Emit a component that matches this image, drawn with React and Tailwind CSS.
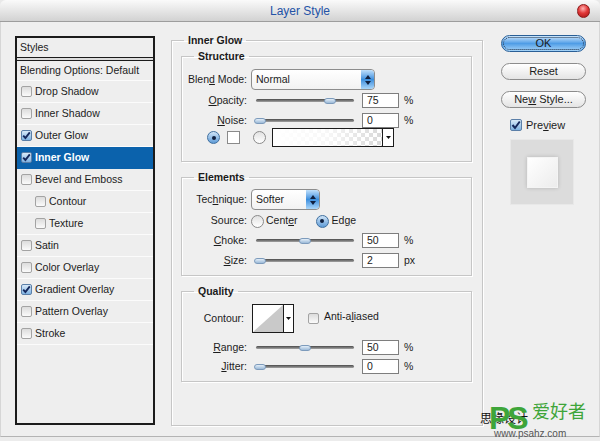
import React from "react";

const font = { fontFamily: '"Liberation Sans", Arial, sans-serif' };
const cjk = { fontFamily: '"Noto Sans CJK SC", sans-serif' };

const Check = ({ checked, indent }) => (
  <span
    className={`inline-flex items-center justify-center w-[11px] h-[11px] shrink-0 rounded-[2px] border ${
      checked
        ? "border-[#5b7fa8] bg-gradient-to-b from-[#d8e9f8] to-[#7fb2e2]"
        : "border-[#a3a3a3] bg-gradient-to-b from-[#dcdcdc] to-[#fbfbfb]"
    } ${indent ? "ml-[18px]" : "ml-[4px]"}`}
  >
    {checked && (
      <svg width="9" height="9" viewBox="0 0 9 9">
        <path d="M1.2 4.6 L3.4 7 L7.8 1.4" stroke="#15285c" strokeWidth="1.9" fill="none" />
      </svg>
    )}
  </span>
);

const Radio = ({ on, className = "" }) => (
  <span
    className={`flex items-center justify-center w-[13px] h-[13px] shrink-0 rounded-full border ${
      on
        ? "border-[#3f6f9f] bg-gradient-to-b from-[#cfe4f7] to-[#5e9bd6]"
        : "border-[#8a8a8a] bg-gradient-to-b from-[#e2e2e2] to-[#ffffff]"
    } ${className}`}
  >
    {on && <span className="w-[4px] h-[4px] rounded-full bg-[#10203f]" />}
  </span>
);

const Select = ({ value, w }) => (
  <div className={`${w} ml-[4px] h-[21px] flex rounded-[4px] border border-[#8d8d8d] bg-gradient-to-b from-[#ffffff] to-[#f2f2f2] overflow-hidden`}>
    <div className="flex-1 flex items-center pl-[4px]">{value}</div>
    <div className="w-[13px] flex flex-col items-center justify-center gap-[2px] rounded-r-[3px] bg-gradient-to-b from-[#bfe0fb] via-[#3b8fdd] to-[#a9d6fa]">
      <svg width="6" height="4" viewBox="0 0 6 4"><path d="M0 4 L3 0 L6 4Z" fill="#10203f" /></svg>
      <svg width="6" height="4" viewBox="0 0 6 4"><path d="M0 0 L3 4 L6 0Z" fill="#10203f" /></svg>
    </div>
  </div>
);

const Slider = ({ thumb }) => (
  <div className="relative w-[98px] h-[10px] flex items-center ml-[9px]">
    <div className="h-[3px] w-full rounded-full bg-gradient-to-b from-[#4b4b4b] to-[#a5a5a5]" />
    <div className={`absolute top-[2px] ${thumb} w-[12px] h-[6px] rounded-full border border-[#7d9bbc] bg-gradient-to-b from-[#e3eef8] to-[#9cbad8]`} />
  </div>
);

const Num = ({ v }) => (
  <div className="ml-[8px] w-[37px] h-[15px] border border-[#7e7e7e] bg-white flex items-center pl-[4px]">
    {v}
  </div>
);

const Label = ({ children, w = "w-[65px]" }) => (
  <div className={`${w} shrink-0 text-right text-[#1c1c1c]`}>{children}</div>
);

const SliderRow = ({ label, thumb, v, unit, mt }) => (
  <div className={`flex items-center h-[15px] ${mt}`}>
    <Label>{label}</Label>
    <Slider thumb={thumb} />
    <Num v={v} />
    <span className="ml-[5px]">{unit}</span>
  </div>
);

const Group = ({ title, children, className }) => (
  <fieldset className={`border border-[#c6c6c6] shadow-[inset_1px_1px_0_#fff,1px_1px_0_#fff] p-0 m-0 ${className}`}>
    <legend className="ml-[12px] px-[4px] font-bold leading-[13px] text-[#1a1a1a]">{title}</legend>
    {children}
  </fieldset>
);

const u = (c) => <span className="underline">{c}</span>;

const styles = [
  { n: "Drop Shadow" },
  { n: "Inner Shadow" },
  { n: "Outer Glow", c: true },
  { n: "Inner Glow", c: true, sel: true },
  { n: "Bevel and Emboss" },
  { n: "Contour", i: true },
  { n: "Texture", i: true },
  { n: "Satin" },
  { n: "Color Overlay" },
  { n: "Gradient Overlay", c: true },
  { n: "Pattern Overlay" },
  { n: "Stroke" },
];

export default function App() {
  return (
    <div className="relative w-[600px] h-[441px] overflow-hidden flex flex-col bg-[#e9e9e9] text-[#1c1c1c] text-[10.5px]" style={font}>
      {/* title bar */}
      <div className="relative h-[22px] shrink-0 flex items-center justify-center rounded-t-[6px] border-b border-[#9d9d9d] bg-gradient-to-b from-[#fafafa] via-[#e6e6e6] to-[#d2d2d2]">
        <span className="text-[12px] text-[#2452a6]">Layer Style</span>
        <span className="absolute right-[10px] top-[4px] w-[13px] h-[14px] rounded-full border border-[#8c1a1a] bg-[radial-gradient(circle_at_45%_30%,#ffb3b3_0%,#e23a3a_45%,#a31212_100%)]" />
      </div>

      {/* body */}
      <div className="h-[415px] shrink-0 flex pl-[14px] pt-[14px] bg-[#efefef] border-b border-[#b4b4b4] border-x border-x-[#d6d6d6]">
        {/* left list */}
        <div className="w-[140px] h-[389px] border-2 border-[#1b1b1b] bg-[#eeeeee] flex flex-col">
          <div className="h-[20px] flex items-center pl-[3px] border-b border-[#1b1b1b]">Styles</div>
          <div className="h-[2px] bg-[#dcdcdc]" />
          <div className="h-[1px] bg-[#1b1b1b]" />
          <div className="h-[20px] flex items-center pl-[3px] border-b border-[#fbfbfb]">Blending Options: Default</div>
          {styles.map((s) => (
            <div
              key={s.n}
              className={`h-[22px] flex items-center gap-[3px] border-b ${
                s.sel ? "bg-[#0b62ac] text-white font-bold border-[#0b62ac]" : "border-[#fbfbfb]"
              }`}
            >
              <Check checked={s.c} indent={s.i} />
              <span>{s.n}</span>
            </div>
          ))}
        </div>

        {/* middle */}
        <div className="ml-[16px] -mt-[2px] w-[312px] h-[392px]">
          <Group title="Inner Glow" className="h-full">
            <div className="pl-[9px] pr-[10px] pt-[3px]">
              <Group title="Structure">
                <div className="pt-[6px] pb-[14px]">
                  <div className="flex items-center h-[21px]">
                    <Label>Blen{u("d")} Mode:</Label>
                    <Select value="Normal" w="w-[124px]" />
                  </div>
                  <SliderRow label={<>{u("O")}pacity:</>} thumb="left-[68px]" v="75" unit="%" mt="mt-[3px]" />
                  <SliderRow label={<>{u("N")}oise:</>} thumb="left-[-2px]" v="0" unit="%" mt="mt-[5px]" />
                  <div className="flex items-center h-[19px]">
                    <Radio on className="ml-[25px]" />
                    <span className="ml-[7px] w-[13px] h-[13px] bg-white border border-[#8a8a8a]" />
                    <Radio className="ml-[13px]" />
                    <div className="ml-[6px] w-[122px] h-[19px] border border-[#1b1b1b] flex">
                      <div className="flex-1 relative bg-[conic-gradient(#d9d9d9_25%,#ffffff_0_50%,#d9d9d9_0_75%,#ffffff_0)] bg-[length:8px_8px]">
                        <div className="absolute inset-0 bg-gradient-to-r from-white via-white/80 to-white/0" />
                      </div>
                      <div className="w-[11px] border-l border-[#1b1b1b] bg-white flex items-center justify-center">
                        <svg width="5" height="3" viewBox="0 0 5 3"><path d="M0 0 L2.5 3 L5 0Z" fill="#111" /></svg>
                      </div>
                    </div>
                  </div>
                </div>
              </Group>

              <Group title="Elements" className="mt-[9px]">
                <div className="pt-[5px] pb-[7px]">
                  <div className="flex items-center h-[21px]">
                    <Label>Tec{u("h")}nique:</Label>
                    <Select value="Softer" w="w-[69px]" />
                  </div>
                  <div className="flex items-center h-[14px] mt-[4px]">
                    <Label>Source:</Label>
                    <Radio className="ml-[4px]" />
                    <span className="ml-[2px]">Cent{u("e")}r</span>
                    <Radio on className="ml-[18px]" />
                    <span className="ml-[3px]">Ed{u("g")}e</span>
                  </div>
                  <SliderRow label={<>{u("C")}hoke:</>} thumb="left-[43px]" v="50" unit="%" mt="mt-[5px]" />
                  <SliderRow label={<>{u("S")}ize:</>} thumb="left-[-2px]" v="2" unit="px" mt="mt-[5px]" />
                </div>
              </Group>

              <Group title="Quality" className="mt-[9px]">
                <div className="pt-[6px] pb-[7px]">
                  <div className="flex items-center h-[29px]">
                    <Label w="w-[62px]">Contour:</Label>
                    <div className="ml-[8px] w-[42px] h-[29px] flex border border-[#1b1b1b] bg-white">
                      <svg width="30" height="27" viewBox="0 0 30 27" className="shrink-0">
                        <polygon points="0,27 30,0 30,27" fill="#c9c9c9" />
                      </svg>
                      <div className="flex-1 border-l border-[#1b1b1b] flex items-center justify-center">
                        <svg width="5" height="3" viewBox="0 0 5 3"><path d="M0 0 L2.5 3 L5 0Z" fill="#111" /></svg>
                      </div>
                    </div>
                    <span className="ml-[10px] flex"><Check /></span>
                    <span className="ml-[5px] -mt-[3px]">Anti-a{u("l")}iased</span>
                  </div>
                  <SliderRow label={<>{u("R")}ange:</>} thumb="left-[43px]" v="50" unit="%" mt="mt-[7px]" />
                  <SliderRow label={<>{u("J")}itter:</>} thumb="left-[-2px]" v="0" unit="%" mt="mt-[4px]" />
                </div>
              </Group>
            </div>
          </Group>
        </div>

        {/* right buttons */}
        <div className="ml-[18px] -mt-[1px] w-[85px] flex flex-col text-[11px]">
          <div className="h-[17px] rounded-full border border-[#2a5f96] bg-gradient-to-b from-[#cbe6fc] via-[#4f9de6] to-[#a6d4f8] p-[1px]">
            <div className="h-full rounded-full border border-dotted border-[#1a2a40] flex items-center justify-center">OK</div>
          </div>
          <div className="mt-[11px] h-[17px] rounded-full border border-[#8c8c8c] bg-gradient-to-b from-[#ffffff] to-[#e4e4e4] flex items-center justify-center">
            Reset
          </div>
          <div className="mt-[11px] h-[17px] rounded-full border border-[#8c8c8c] bg-gradient-to-b from-[#ffffff] to-[#e4e4e4] flex items-center justify-center">
            <span>Ne{u("w")} Style...</span>
          </div>
          <div className="mt-[11px] h-[12px] flex items-center">
            <span className="ml-[9px] inline-flex items-center justify-center w-[12px] h-[12px] rounded-[2px] border border-[#5b7fa8] bg-gradient-to-b from-[#d8e9f8] to-[#7fb2e2]">
              <svg width="10" height="10" viewBox="0 0 10 10">
                <path d="M1.5 5 L4 8 L8.8 1.5" stroke="#15285c" strokeWidth="2" fill="none" />
              </svg>
            </span>
            <span className="ml-[4px]">Pre{u("v")}iew</span>
          </div>
          <div className="mt-[8px] ml-[9px] w-[64px] h-[66px] bg-[#dcdcdc] border border-[#e8e8e8] flex items-center justify-center">
            <div className="w-[31px] h-[31px] bg-gradient-to-br from-[#ffffff] to-[#ececec] border border-[#f4f4f4] shadow-[0_0_4px_rgba(0,0,0,0.18)]" />
          </div>
        </div>
      </div>
      <div className="flex-1 bg-[#ececec]" />

      {/* watermark */}
      <div className="absolute left-[480px] top-[400px] w-[115px] h-[41px] pointer-events-none">
        <span className="absolute left-[0px] top-[12px] text-[12px] leading-none text-[#111]" style={cjk}>思缘设计</span>
        <span className="absolute left-[9px] top-[2px] text-[32px] font-bold text-[#3ea53a] leading-none tracking-[-3px]">PS</span>
        <span className="absolute left-[52px] top-[1px] text-[18px] text-[#3ea53a] leading-none" style={cjk}>爱好者</span>
        <span className="absolute left-[14px] top-[29px] text-[10px] text-[#555] leading-none">www.psahz.com</span>
      </div>
    </div>
  );
}
